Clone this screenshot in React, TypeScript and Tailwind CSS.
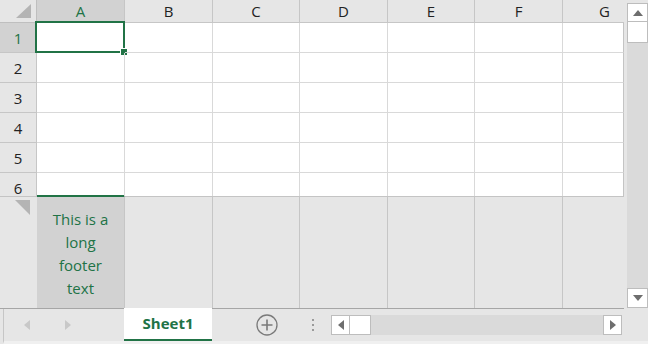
import React from 'react';

const cols = ['A', 'B', 'C', 'D', 'E', 'F', 'G'];
const widths = ['w-[88px]', 'w-[88px]', 'w-[87px]', 'w-[88px]', 'w-[87px]', 'w-[88px]', 'flex-1'];
const rows = [1, 2, 3, 4, 5, 6];

const font = { fontFamily: '"Open Sans", "Noto Sans", sans-serif' };

function Tri({ dir, className }: { dir: 'up' | 'down' | 'left' | 'right'; className?: string }) {
  const pts = {
    up: '0,8 5,2 10,8',
    down: '0,2 5,8 10,2',
    left: '8,0 2,5 8,10',
    right: '2,0 8,5 2,10',
  }[dir];
  return (
    <svg width="10" height="10" viewBox="0 0 10 10" className={className}>
      <polygon points={pts} fill="currentColor" />
    </svg>
  );
}

export default function App() {
  return (
    <div className="w-[648px] h-[344px] bg-[#e6e6e6] flex flex-col overflow-hidden text-[#222]" style={font}>
      <div className="flex h-[309px]">
        <div className="flex flex-col w-[624px]">
          {/* sheet grid */}
          <div className="h-[197px] overflow-hidden border-b border-[#c4c4c4]">
            <div className="flex h-[23px]">
              <div className="w-[37px] bg-[#e6e6e6] border-r border-b border-[#bfbfbf] flex items-end justify-end pr-[5px] pb-[4px]">
                <svg width="15" height="14" viewBox="0 0 15 14">
                  <polygon points="15,0 15,14 0,14" fill="#b4b4b4" />
                </svg>
              </div>
              {cols.map((c, i) => (
                <div
                  key={c}
                  className={`${widths[i]} border-r border-b border-[#c6c6c6] flex items-center justify-center text-[15px] ${
                    i === 0 ? 'bg-[#d2d2d2] text-[#217346]' : 'bg-[#e6e6e6]'
                  } ${i === 6 ? 'border-r-0 justify-end pr-[14px]' : ''}`}
                >
                  {c}
                </div>
              ))}
            </div>
            {rows.map((r) => (
              <div key={r} className="flex h-[30px] bg-white">
                <div
                  className={`w-[37px] border-r border-b border-[#c6c6c6] flex items-center justify-center text-[15px] pt-[2px] ${
                    r === 1 ? 'bg-[#d2d2d2] text-[#217346]' : 'bg-[#e6e6e6]'
                  }`}
                >
                  {r}
                </div>
                {cols.map((c, i) => (
                  <div
                    key={c}
                    className={`${widths[i]} border-r border-b border-[#d9d9d9] relative ${i === 6 ? 'border-r-[#c4c4c4]' : ''}`}
                  >
                    {r === 1 && i === 0 && (
                      <>
                        <div className="absolute -left-[2px] -top-[2px] -right-px -bottom-px border-2 border-[#217346]" />
                        <div className="absolute -right-[4px] -bottom-[4px] w-[6px] h-[6px] bg-[#217346] border border-white box-content" />
                      </>
                    )}
                  </div>
                ))}
              </div>
            ))}
          </div>
          {/* footer row */}
          <div className="flex flex-1 border-b border-[#a6a6a6]">
            <div className="w-[37px] pt-[3px] pl-[15px]">
              <svg width="15" height="15" viewBox="0 0 15 15">
                <polygon points="0,0 15,0 15,15" fill="#b4b4b4" />
              </svg>
            </div>
            {cols.map((c, i) => (
              <div
                key={c}
                className={`${widths[i]} ${i === 6 ? '' : 'border-r border-[#c6c6c6]'} ${
                  i === 0
                    ? 'bg-[#d2d2d2] border-t-2 border-t-[#217346] -mt-[2px] text-[#217346] text-[15px] leading-[23px] text-center flex items-center justify-center px-[10px]'
                    : ''
                }`}
              >
                {i === 0 && <span className="mt-[2px]">This is a long footer text</span>}
              </div>
            ))}
          </div>
        </div>
        {/* vertical scrollbar */}
        <div className="w-[24px] pl-[3px] pt-[3px] pb-px">
          <div className="h-full bg-[#dadada] flex flex-col w-[21px]">
            <div className="h-[19px] bg-white border border-[#bdbdbd] flex items-center justify-center">
              <Tri dir="up" className="text-[#6e6e6e]" />
            </div>
            <div className="h-[21px] bg-white border border-[#bdbdbd] border-t-0" />
            <div className="flex-1" />
            <div className="h-[20px] bg-white border border-[#bdbdbd] flex items-center justify-center">
              <Tri dir="down" className="text-[#6e6e6e]" />
            </div>
          </div>
        </div>
      </div>
      {/* sheet tab bar */}
      <div className="flex-1 flex items-stretch border-l border-[#c6c6c6] ml-[3px] border-b-[3px] border-b-[#f0f0f0]">
        <div className="w-[120px] flex items-center gap-[31px] pl-[18px] text-[#c8c8c8]">
          <Tri dir="left" />
          <Tri dir="right" />
        </div>
        <div className="w-[88px] bg-white border-b-2 border-[#217346] -mt-px flex items-center justify-center text-[#217346] font-bold text-[15px]">
          Sheet1
        </div>
        <div className="flex items-center">
          <svg width="22" height="22" viewBox="0 0 22 22" className="ml-[44px]">
            <circle cx="11" cy="11" r="10" fill="none" stroke="#7a7a7a" strokeWidth="1.3" />
            <path d="M11 5.5v11M5.5 11h11" stroke="#7a7a7a" strokeWidth="1.6" />
          </svg>
          <div className="ml-[34px] flex flex-col gap-[3px]">
            <div className="w-[2px] h-[2px] bg-[#9a9a9a]" />
            <div className="w-[2px] h-[2px] bg-[#9a9a9a]" />
            <div className="w-[2px] h-[2px] bg-[#9a9a9a]" />
          </div>
          <div className="ml-[17px] w-[291px] h-[20px] bg-[#dadada] flex">
            <div className="w-[19px] bg-white border border-[#bdbdbd] flex items-center justify-center">
              <Tri dir="left" className="text-[#6e6e6e]" />
            </div>
            <div className="w-[21px] bg-white border border-[#bdbdbd] border-l-0" />
            <div className="flex-1" />
            <div className="w-[19px] bg-white border border-[#bdbdbd] flex items-center justify-center">
              <Tri dir="right" className="text-[#6e6e6e]" />
            </div>
          </div>
        </div>
      </div>
    </div>
  );
}
